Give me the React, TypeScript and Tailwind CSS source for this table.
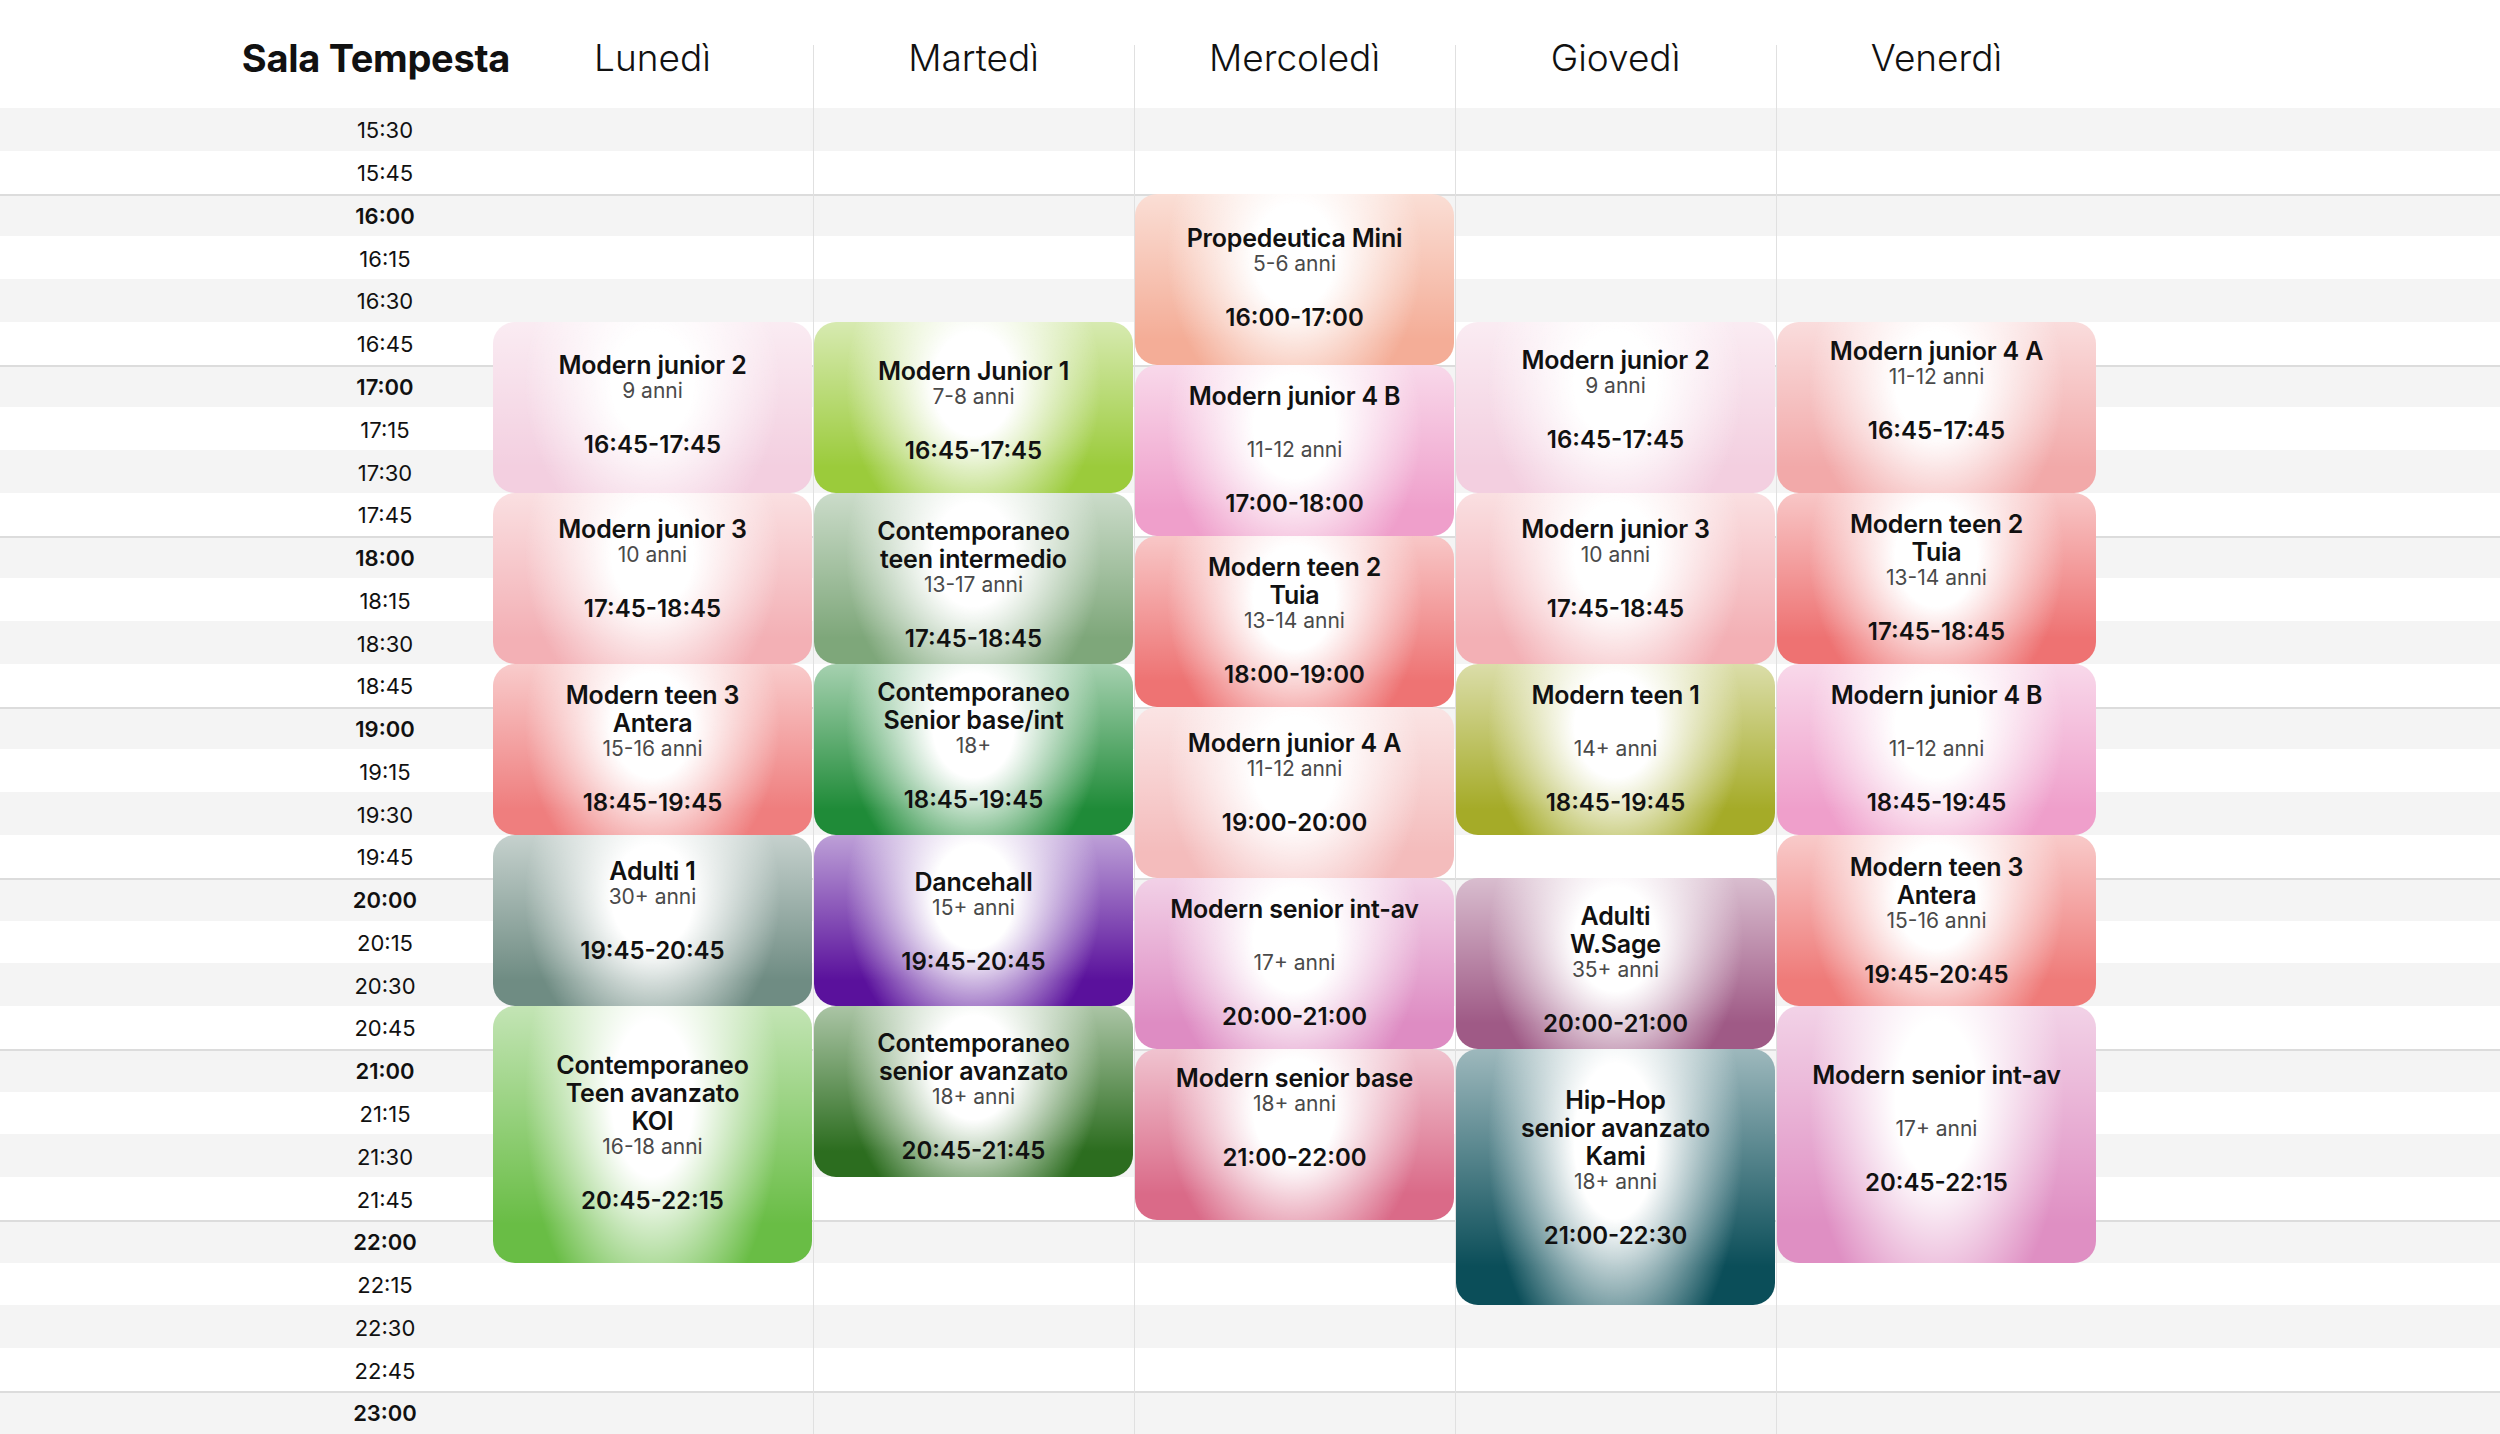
import React from "react";

const TIMES = [
  "15:30","15:45","16:00","16:15","16:30","16:45","17:00","17:15","17:30","17:45",
  "18:00","18:15","18:30","18:45","19:00","19:15","19:30","19:45","20:00","20:15",
  "20:30","20:45","21:00","21:15","21:30","21:45","22:00","22:15","22:30","22:45","23:00",
];

const ROWS = [
  "row-start-[2]","row-start-[3]","row-start-[4]","row-start-[5]","row-start-[6]","row-start-[7]",
  "row-start-[8]","row-start-[9]","row-start-[10]","row-start-[11]","row-start-[12]","row-start-[13]",
  "row-start-[14]","row-start-[15]","row-start-[16]","row-start-[17]","row-start-[18]","row-start-[19]",
  "row-start-[20]","row-start-[21]","row-start-[22]","row-start-[23]","row-start-[24]","row-start-[25]",
  "row-start-[26]","row-start-[27]","row-start-[28]","row-start-[29]","row-start-[30]","row-start-[31]",
  "row-start-[32]",
];

const DAYS = [
  { name: "Lunedì", col: "col-start-2" },
  { name: "Martedì", col: "col-start-3" },
  { name: "Mercoledì", col: "col-start-4" },
  { name: "Giovedì", col: "col-start-5" },
  { name: "Venerdì", col: "col-start-6" },
];

type Card = {
  pos: string;
  title: string[];
  age: string;
  time: string;
  spread?: boolean;
  bg: string;
  adj: string;
};

const CARDS: Card[] = [
  // Lunedì
  { pos: "col-start-2 row-start-[7] row-span-4", title: ["Modern junior 2"], age: "9 anni", time: "16:45-17:45", bg: "bg-[#f3cfe0]", adj: "pb-[5px]" },
  { pos: "col-start-2 row-start-[11] row-span-4", title: ["Modern junior 3"], age: "10 anni", time: "17:45-18:45", bg: "bg-[#f3b0b5]", adj: "pb-[19px]" },
  { pos: "col-start-2 row-start-[15] row-span-4", title: ["Modern teen 3", "Antera"], age: "15-16 anni", time: "18:45-19:45", bg: "bg-[#ef7e7e]", adj: "pb-0" },
  { pos: "col-start-2 row-start-[19] row-span-4", title: ["Adulti 1"], age: "30+ anni", time: "19:45-20:45", bg: "bg-[#6f8c83]", adj: "pb-[19px]" },
  { pos: "col-start-2 row-start-[23] row-span-6", title: ["Contemporaneo", "Teen avanzato", "KOI"], age: "16-18 anni", time: "20:45-22:15", bg: "bg-[#69bd45]", adj: "pb-[3px]" },
  // Martedì
  { pos: "col-start-3 row-start-[7] row-span-4", title: ["Modern Junior 1"], age: "7-8 anni", time: "16:45-17:45", bg: "bg-[#9bcb3b]", adj: "pt-[8px]" },
  { pos: "col-start-3 row-start-[11] row-span-4", title: ["Contemporaneo", "teen intermedio"], age: "13-17 anni", time: "17:45-18:45", bg: "bg-[#7ea77a]", adj: "pt-[13px]" },
  { pos: "col-start-3 row-start-[15] row-span-4", title: ["Contemporaneo", "Senior base/int"], age: "18+", time: "18:45-19:45", bg: "bg-[#1f8b38]", adj: "pb-[6px]" },
  { pos: "col-start-3 row-start-[19] row-span-4", title: ["Dancehall"], age: "15+ anni", time: "19:45-20:45", bg: "bg-[#5a119c]", adj: "pt-[2px]" },
  { pos: "col-start-3 row-start-[23] row-span-4", title: ["Contemporaneo", "senior avanzato"], age: "18+ anni", time: "20:45-21:45", bg: "bg-[#2c6d1f]", adj: "pt-[10px]" },
  // Mercoledì
  { pos: "col-start-4 row-start-[4] row-span-4", title: ["Propedeutica Mini"], age: "5-6 anni", time: "16:00-17:00", bg: "bg-[#f4ad97]", adj: "pb-[3px]" },
  { pos: "col-start-4 row-start-[8] row-span-4", title: ["Modern junior 4 B"], age: "11-12 anni", time: "17:00-18:00", spread: true, bg: "bg-[#ef9fcb]", adj: "pb-0" },
  { pos: "col-start-4 row-start-[12] row-span-4", title: ["Modern teen 2", "Tuia"], age: "13-14 anni", time: "18:00-19:00", bg: "bg-[#ee7373]", adj: "pb-0" },
  { pos: "col-start-4 row-start-[16] row-span-4", title: ["Modern junior 4 A"], age: "11-12 anni", time: "19:00-20:00", bg: "bg-[#f4bcbc]", adj: "pb-[18px]" },
  { pos: "col-start-4 row-start-[20] row-span-4", title: ["Modern senior int-av"], age: "17+ anni", time: "20:00-21:00", spread: true, bg: "bg-[#de8cc3]", adj: "pb-0" },
  { pos: "col-start-4 row-start-[24] row-span-4", title: ["Modern senior base"], age: "18+ anni", time: "21:00-22:00", bg: "bg-[#da6a88]", adj: "pb-[32px]" },
  // Giovedì
  { pos: "col-start-5 row-start-[7] row-span-4", title: ["Modern junior 2"], age: "9 anni", time: "16:45-17:45", bg: "bg-[#f3cfe0]", adj: "pb-[14px]" },
  { pos: "col-start-5 row-start-[11] row-span-4", title: ["Modern junior 3"], age: "10 anni", time: "17:45-18:45", bg: "bg-[#f3b0b5]", adj: "pb-[19px]" },
  { pos: "col-start-5 row-start-[15] row-span-4", title: ["Modern teen 1"], age: "14+ anni", time: "18:45-19:45", spread: true, bg: "bg-[#a5ab28]", adj: "pb-0" },
  { pos: "col-start-5 row-start-[20] row-span-4", title: ["Adulti", "W.Sage"], age: "35+ anni", time: "20:00-21:00", bg: "bg-[#9f5a86]", adj: "pt-[13px]" },
  { pos: "col-start-5 row-start-[24] row-span-6", title: ["Hip-Hop", "senior avanzato", "Kami"], age: "18+ anni", time: "21:00-22:30", bg: "bg-[#0b4e59]", adj: "pb-[18px]" },
  // Venerdì
  { pos: "col-start-6 row-start-[7] row-span-4", title: ["Modern junior 4 A"], age: "11-12 anni", time: "16:45-17:45", bg: "bg-[#f2a9a9]", adj: "pb-[32px]" },
  { pos: "col-start-6 row-start-[11] row-span-4", title: ["Modern teen 2", "Tuia"], age: "13-14 anni", time: "17:45-18:45", bg: "bg-[#ee7272]", adj: "pb-0" },
  { pos: "col-start-6 row-start-[15] row-span-4", title: ["Modern junior 4 B"], age: "11-12 anni", time: "18:45-19:45", spread: true, bg: "bg-[#ef9fcb]", adj: "pb-0" },
  { pos: "col-start-6 row-start-[19] row-span-4", title: ["Modern teen 3", "Antera"], age: "15-16 anni", time: "19:45-20:45", bg: "bg-[#ef7b79]", adj: "pb-0" },
  { pos: "col-start-6 row-start-[23] row-span-6", title: ["Modern senior int-av"], age: "17+ anni", time: "20:45-22:15", spread: true, bg: "bg-[#df8fc3]", adj: "pb-[11px]" },
];

const OVERLAY =
  "[background-image:radial-gradient(ellipse_40%_95%_at_50%_36%,#ffffff_32%,rgba(255,255,255,0)_100%),linear-gradient(to_bottom,rgba(255,255,255,0.6),rgba(255,255,255,0)_85%)]";

function ClassCard({ c }: { c: Card }) {
  return (
    <div
      className={`${c.pos} ${c.bg} ${OVERLAY} ${c.adj} mx-[1px] rounded-[22px] flex flex-col items-center justify-center text-center text-[#111]`}
    >
      {c.title.map((t) => (
        <div key={t} className="text-[25px] leading-[28px] font-semibold whitespace-nowrap tracking-[-0.2px]">
          {t}
        </div>
      ))}
      {c.spread && <div className="h-[28px]" />}
      <div className="text-[21px] leading-[24px] text-[#4a4a4a]">{c.age}</div>
      <div className="h-[28px]" />
      <div className="text-[24px] leading-[28px] font-semibold">{c.time}</div>
    </div>
  );
}

export default function App() {
  return (
    <div className="w-[2500px] h-[1434px] overflow-hidden bg-white font-['Inter',sans-serif] text-[#111]">
      <div className="grid grid-cols-[492px_repeat(5,321px)_1fr] grid-rows-[108px_repeat(31,42.774px)]">
        {TIMES.map((t, i) => (
          <div
            key={"band" + t}
            className={`${ROWS[i]} col-span-full ${i % 2 === 0 ? "bg-[#f4f4f4]" : "bg-white"} ${
              t.endsWith(":00") ? "border-t-2 border-[#dcdcdc]" : ""
            }`}
          />
        ))}

        <div className="col-start-3 row-span-full mt-[45px] border-l border-[#e0e0e0]" />
        <div className="col-start-4 row-span-full mt-[45px] border-l border-[#e0e0e0]" />
        <div className="col-start-5 row-span-full mt-[45px] border-l border-[#e0e0e0]" />
        <div className="col-start-6 row-span-full mt-[45px] border-l border-[#e0e0e0]" />

        <div className="col-start-1 row-start-1 flex justify-end pt-[39px]">
          <span className="-mr-[18px] text-[38px] leading-none font-bold whitespace-nowrap tracking-[-0.3px]">Sala Tempesta</span>
        </div>
        {DAYS.map((d) => (
          <div key={d.name} className={`${d.col} row-start-1 flex justify-center pt-[39px]`}>
            <span className="text-[37px] leading-none font-light">{d.name}</span>
          </div>
        ))}

        {TIMES.map((t, i) => (
          <div
            key={"time" + t}
            className={`${ROWS[i]} col-start-1 flex items-center justify-center pl-[278px] pt-[3px] text-[22px] ${
              t.endsWith(":00") ? "font-semibold" : "font-normal"
            }`}
          >
            {t}
          </div>
        ))}

        {CARDS.map((c) => (
          <ClassCard key={c.pos} c={c} />
        ))}
      </div>
    </div>
  );
}
